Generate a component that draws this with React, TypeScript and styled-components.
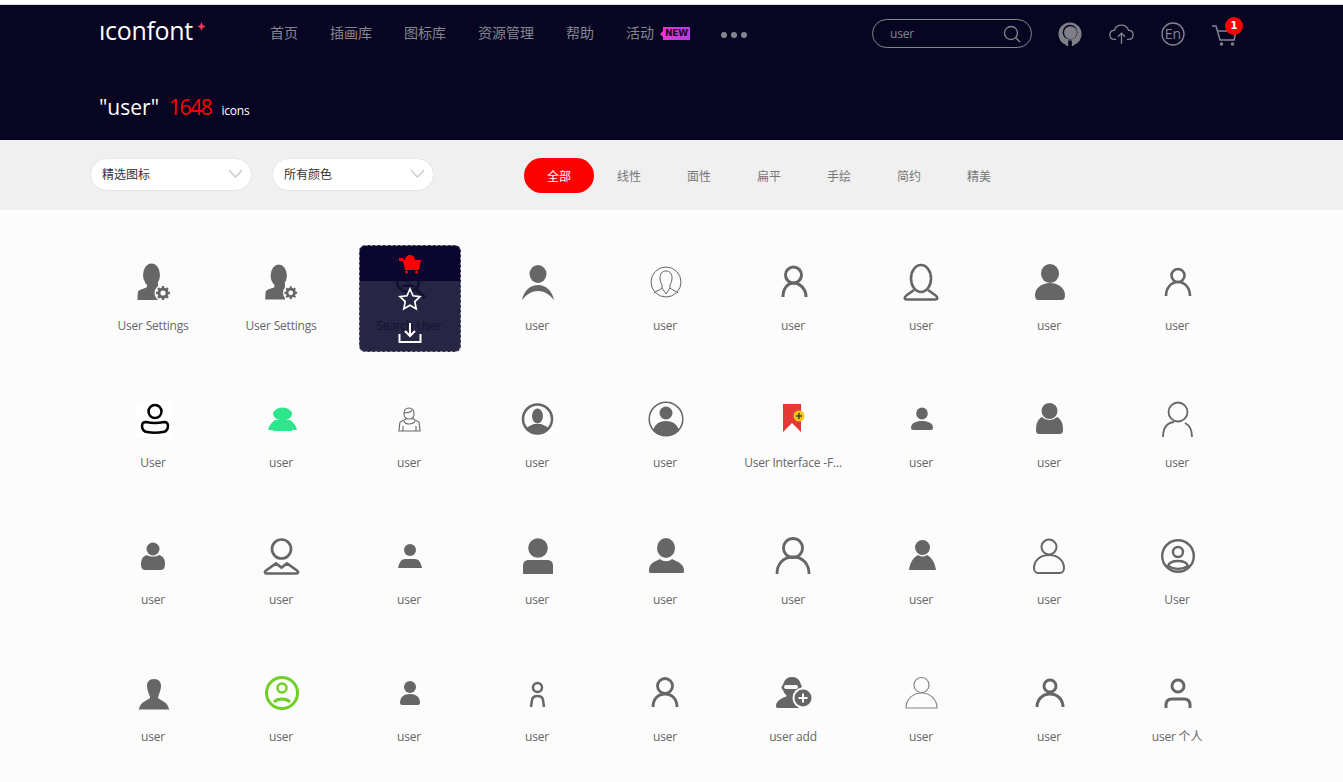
import styled, { createGlobalStyle } from 'styled-components';
import type { ReactNode } from 'react';

const GlobalStyle = createGlobalStyle`
  html, body {
    margin: 0;
    height: 100%;
    overflow: hidden;
    background: #fcfcfc;
    font-family: "Open Sans", "Noto Sans CJK SC", sans-serif;
  }
`;

const TopStrip = styled.div`
  height: 4px;
  background: #fff;
  border-bottom: 1px solid #ddd;
`;

const Header = styled.header`
  height: 135px;
  background: #070522;
  padding: 0 0 0 99px;
  box-sizing: border-box;
`;

const NavBar = styled.div`
  display: flex;
  align-items: center;
  height: 57px;
`;

const Logo = styled.div`
  display: flex;
  width: 171px;
  color: #fff;
  font: 500 25px/1 "Open Sans", sans-serif;
  letter-spacing: -0.3px;
  height: 30px;
  margin-bottom: 6px;
  align-items: center;
`;

const LogoStar = styled.svg`
  width: 9px;
  height: 9px;
  margin: -8px 0 0 4px;
`;

const NavList = styled.nav`
  display: flex;
  align-items: center;
  gap: 32px;
  width: 602px;
`;

const NavItem = styled.span`
  display: flex;
  align-items: center;
  color: #85858f;
  margin-bottom: 3px;
  font: 14px/20px "Noto Sans CJK SC", sans-serif;
`;

const NewBadge = styled.span`
  margin-left: 9px;
  width: 27px;
  height: 13px;
  position: relative;
  top: 1px;
  background: linear-gradient(90deg, #ec34cf, #b03fe0);
  color: #16082c;
  font: bold 9px/13px "DejaVu Sans", sans-serif;
  text-align: center;
  letter-spacing: -0.2px;
  &::before {
    content: '';
    position: absolute;
    left: -3px;
    top: 4px;
    border: 3px solid transparent;
    border-left: 0;
    border-right-color: #ec34cf;
  }
`;

const Dots = styled.span`
  display: flex;
  gap: 4px;
  margin: 2px 0 0 -1px;
  & i {
    width: 6px;
    height: 6px;
    border-radius: 50%;
    background: #85858f;
  }
`;

const SearchBox = styled.div`
  width: 160px;
  height: 29px;
  box-sizing: border-box;
  display: flex;
  align-items: center;
  justify-content: space-between;
  padding: 0 10px 0 17px;
  border: 1px solid #85858f;
  border-radius: 15px;
  color: #85858f;
  font-size: 12px;
  letter-spacing: -0.2px;
`;

const ToolIcons = styled.div`
  display: flex;
  align-items: center;
  margin-left: 26px;
  gap: 27px;
`;

const CartWrap = styled.div`
  position: relative;
  width: 26px;
  height: 30px;
`;

const CartIcon = styled.svg`
  display: block;
  margin-top: 6px;
`;

const CartBadge = styled.span`
  position: absolute;
  left: 13px;
  top: -2px;
  width: 18px;
  height: 18px;
  border-radius: 50%;
  background: #f00;
  color: #fff;
  font: bold 10px/18px "DejaVu Sans", sans-serif;
  text-align: center;
`;

const ResultTitle = styled.div`
  display: flex;
  align-items: baseline;
  margin-top: 31px;
  color: #fff;
  font-size: 21px;
  line-height: 28px;
`;

const ResultCount = styled.span`
  color: #f00;
  letter-spacing: -1.4px;
  margin: 0 10px 0 10px;
`;

const ResultUnit = styled.span`
  font-size: 12px;
  letter-spacing: -0.2px;
`;

const FilterBar = styled.div`
  display: flex;
  align-items: flex-start;
  height: 70px;
  box-sizing: border-box;
  padding: 18px 0 0 90px;
  background: #f0f0f0;
`;

const Select = styled.div`
  width: 162px;
  height: 33px;
  margin-right: 20px;
  box-sizing: border-box;
  display: flex;
  align-items: center;
  justify-content: space-between;
  padding: 0 8px 2px 11px;
  background: #fff;
  border: 1px solid #e6e6e6;
  border-radius: 17px;
  color: #333;
  font: 12px/1 "Noto Sans CJK SC", sans-serif;
`;

const Tabs = styled.div`
  display: flex;
  margin-left: 70px;
`;

const Tab = styled.div<{ $active?: boolean }>`
  width: 70px;
  height: 35px;
  border-radius: 18px;
  text-align: center;
  background: ${p => (p.$active ? '#f00' : 'transparent')};
  color: ${p => (p.$active ? '#fff' : '#777')};
  font: 12px/35px "Noto Sans CJK SC", sans-serif;
`;

const Grid = styled.main`
  display: grid;
  grid-template-columns: repeat(9, 128px);
  padding: 35px 0 0 89px;
`;

const Cell = styled.div`
  position: relative;
  height: 137px;
  display: flex;
  flex-direction: column;
  align-items: center;
`;

const IconSvg = styled.svg<{ $color?: string }>`
  display: block;
  width: 40px;
  height: 40px;
  margin-top: 17px;
  color: ${p => p.$color || '#666'};
  flex: none;
`;

const Label = styled.div`
  width: 102px;
  margin-top: 15px;
  color: #666;
  font: 12px/18px "Open Sans", "Noto Sans CJK SC", sans-serif;
  letter-spacing: -0.2px;
  text-align: center;
  white-space: nowrap;
  overflow: hidden;
`;

const HoverCard = styled.div`
  position: absolute;
  left: 14px;
  top: 0;
  width: 102px;
  height: 107px;
  box-sizing: border-box;
  border: 1px dashed #8d8d9b;
  border-radius: 6px;
  overflow: hidden;
  display: flex;
  flex-direction: column;
  align-items: center;
  background: rgba(7, 5, 40, 0.87);
`;

const CardTop = styled.div`
  width: 100%;
  height: 35px;
  flex: none;
  display: flex;
  align-items: flex-start;
  justify-content: center;
  padding: 6px 1px 0 0;
  box-sizing: border-box;
  background: #0a0630;
`;

const CardAction = styled.div`
  height: 35px;
  flex: none;
  display: flex;
  align-items: center;
  margin-right: 1px;
`;

const Gear = ({ x, y, r = 1 }: { x: number; y: number; r?: number }) => (
  <g transform={`translate(${x} ${y}) scale(${r})`}>
    <circle r="8.5" fill="#fcfcfc" />
    <circle r="4.2" fill="none" stroke="currentColor" strokeWidth="2.6" />
    {[0, 45, 90, 135].map(a => (
      <rect key={a} x="-1.2" y="-7" width="2.4" height="14" fill="currentColor" transform={`rotate(${a})`} />
    ))}
    <circle r="2.6" fill="#fcfcfc" />
  </g>
);

const Bust = (
  <>
    <ellipse cx="18.500" cy="13" rx="8.500" ry="11.500" fill="currentColor" />
    <path d="M14 21v4c-3 2-8 2-9 5-.5 2-.5 5-.5 8H25V21z" fill="currentColor" />
  </>
);

const thin = { fill: 'none', stroke: 'currentColor' } as const;

interface IconDef {
  label: string;
  color?: string;
  art: ReactNode;
  card?: boolean;
}

const ICONS: IconDef[] = [
  { label: 'User Settings', art: <>{Bust}<Gear x={30} y={31} /></> },
  { label: 'User Settings', art: <g transform="translate(0 1) scale(.96)">{Bust}<Gear x={31} y={31} r={.95} /></g> },
  {
    label: 'Search User',
    card: true,
    art: (
      <>
        <circle cx="19" cy="19" r="11" {...thin} strokeWidth="3" />
        <path d="M27 27l9 9" {...thin} strokeWidth="3.500" />
        <circle cx="19" cy="16" r="4" fill="currentColor" />
        <path d="M12 25c1-4 13-4 14 0z" fill="currentColor" />
      </>
    ),
  },
  {
    label: 'user',
    art: (
      <>
        <ellipse cx="21" cy="12" rx="8.500" ry="9" fill="currentColor" />
        <path d="M5 38c2-10 9-15 16-15s14 5 16 15c-5-6-10-9-16-9S10 32 5 38z" fill="currentColor" />
      </>
    ),
  },
  {
    label: 'user',
    art: (
      <g {...thin} strokeWidth="1">
        <circle cx="21" cy="20" r="15" />
        <path d="M21 9c-4 0-6 3-6 7 0 3 1 5 2 7v3c-2 2-6 3-8 5M21 9c4 0 6 3 6 7 0 3-1 5-2 7v3c2 2 6 3 8 5M17 26l4 6 4-6" />
      </g>
    ),
  },
  {
    label: 'user',
    art: (
      <g {...thin} strokeWidth="3">
        <ellipse cx="20.500" cy="13" rx="8" ry="8" />
        <path d="M10 35c0-9 5-14 10.500-14S33 26 33 35" />
      </g>
    ),
  },
  {
    label: 'user',
    art: (
      <g {...thin} strokeWidth="2.600">
        <ellipse cx="20" cy="16.500" rx="10" ry="13.500" />
        <path d="M13 28l-7 5c-3 2-3 4.500 0 4.500h28c3 0 3-2.500 0-4.500l-7-5" />
      </g>
    ),
  },
  {
    label: 'user',
    art: (
      <>
        <ellipse cx="21" cy="11.500" rx="9" ry="9.500" fill="currentColor" />
        <path d="M6 33c0-6 6-12 15-12s15 6 15 12c0 3-1 5-3 5H9c-2 0-3-2-3-5z" fill="currentColor" />
      </>
    ),
  },
  {
    label: 'user',
    art: (
      <g {...thin} strokeWidth="2.600">
        <circle cx="21" cy="13.500" r="6.500" />
        <path d="M9 34c0-8 5-14 12-14s12 6 12 14" />
      </g>
    ),
  },

  {
    label: 'User',
    art: (
      <>
        <rect x="3" y="3" width="36" height="35" fill="#fff" />
        <g fill="none" stroke="#000" strokeWidth="2.500">
          <circle cx="22" cy="12.500" r="6.500" />
          <path d="M13 23c5 1 13 1 18 0 3 0 4 2 4 4 0 3-2 6-5 6-5 1-11 1-16 0-3 0-5-3-5-6 0-2 1-4 4-4z" />
        </g>
      </>
    ),
  },
  {
    label: 'user',
    color: '#2ee68c',
    art: (
      <>
        <ellipse cx="21.500" cy="15" rx="9.500" ry="6.500" fill="currentColor" />
        <rect x="17" y="9" width="9" height="4" rx="2" fill="currentColor" />
        <path d="M7 31c1-5 4-8 7-10h15c3 2 6 5 7 10h-5v1H12v-1z" fill="currentColor" />
      </>
    ),
  },
  {
    label: 'user',
    art: (
      <g {...thin} strokeWidth="1.100">
        <path d="M15 15c0-4 2-6 5-6s5 2 5 6c0 3-2 5-5 5s-5-2-5-5zM15 14c3 0 7-1 8-3" />
        <path d="M17 19v1l-6 3-1 8v1h21v-1l-1-8-6-3v-1M15 22c1 4 9 4 11 0M14 27v5M27 27v5" />
      </g>
    ),
  },
  {
    label: 'user',
    art: (
      <>
        <circle cx="20.500" cy="20" r="14.500" {...thin} strokeWidth="2.500" />
        <ellipse cx="20.500" cy="17" rx="5.500" ry="7.500" fill="currentColor" />
        <path d="M9 30c2-3 6-4 8-5h7c2 1 6 2 8 5-3 3-7 4.500-11.500 4.500S12 33 9 30z" fill="currentColor" />
      </>
    ),
  },
  {
    label: 'user',
    art: (
      <>
        <circle cx="21" cy="20" r="16.800" {...thin} strokeWidth="1.500" />
        <circle cx="21" cy="14" r="6.500" fill="currentColor" />
        <path d="M8 32c1-6 6-10 13-10s12 4 13 10c-3 3-8 5-13 5s-10-2-13-5z" fill="currentColor" />
      </>
    ),
  },
  {
    label: 'User Interface -F...',
    art: (
      <>
        <path d="M10 5h18v28l-9-9-9 9z" fill="#e53935" />
        <circle cx="26" cy="17" r="5.500" fill="#f5c518" />
        <path d="M26 14v6M23 17h6" stroke="#444" strokeWidth="1.600" />
      </>
    ),
  },
  {
    label: 'user',
    art: (
      <>
        <ellipse cx="21" cy="14.500" rx="5.800" ry="6" fill="currentColor" />
        <path d="M10 29c0-5 5-7 11-7s11 2 11 7c0 1-1 2-2 2H12c-1 0-2-1-2-2z" fill="currentColor" />
      </>
    ),
  },
  {
    label: 'user',
    art: (
      <>
        <ellipse cx="20.500" cy="12" rx="8" ry="8" fill="currentColor" />
        <path d="M7 31c0-7 2-11 6-13 4 4 11 4 15 0 4 2 6 6 6 13 0 3-1 4-4 4H11c-3 0-4-1-4-4z" fill="currentColor" />
      </>
    ),
  },
  {
    label: 'user',
    art: (
      <g {...thin} strokeWidth="1.800">
        <circle cx="21" cy="13" r="9.500" />
        <path d="M6 38c0-8 3-14 11-15M28 24c4 2 7 7 7 14" />
      </g>
    ),
  },

  {
    label: 'user',
    art: (
      <>
        <ellipse cx="20" cy="13" rx="6.500" ry="6.500" fill="currentColor" />
        <path d="M8 28c0-5 2-8 6-9 3 2 9 2 12 0 4 1 6 4 6 9 0 3-1 6-4 6H12c-3 0-4-3-4-6z" fill="currentColor" />
      </>
    ),
  },
  {
    label: 'user',
    art: (
      <g {...thin} strokeWidth="2.700">
        <circle cx="20.500" cy="13" r="9.500" />
        <path d="M5.500 37.500h30c2 0 2-2 .5-3L26 27.500l-5.500 4-5.500-4-10 7c-1.500 1-1.500 3 .5 3z" />
      </g>
    ),
  },
  {
    label: 'user',
    art: (
      <>
        <circle cx="21" cy="14" r="6" fill="currentColor" />
        <path d="M9 32c1-5 3-9 7-9h10c4 0 6 4 7 9z" fill="currentColor" />
      </>
    ),
  },
  {
    label: 'user',
    art: (
      <>
        <circle cx="21" cy="12" r="9.800" fill="currentColor" />
        <path d="M6 38V30c0-4 2-6 6-6h18c4 0 6 2 6 6v8z" fill="currentColor" />
      </>
    ),
  },
  {
    label: 'user',
    art: (
      <>
        <ellipse cx="21" cy="12" rx="9" ry="10" fill="currentColor" />
        <path d="M4 35c0-5 2-8 7-10l4-2c3 3 9 3 12 0l4 2c5 2 8 5 8 10 0 2-1 2-2 2H6c-1 0-2 0-2-2z" fill="currentColor" />
      </>
    ),
  },
  {
    label: 'user',
    art: (
      <g {...thin} strokeWidth="2.800">
        <ellipse cx="20" cy="12" rx="9.500" ry="9.500" />
        <path d="M4 38c0-10 6-17 16-17s16 7 16 17" />
      </g>
    ),
  },
  {
    label: 'user',
    art: (
      <>
        <ellipse cx="21.500" cy="11.500" rx="7.500" ry="7.500" fill="currentColor" />
        <path d="M8 34c1-8 5-13 9-15 3 2 6 2 9 0 4 2 8 7 9 15z" fill="currentColor" />
      </>
    ),
  },
  {
    label: 'user',
    art: (
      <g {...thin} strokeWidth="2">
        <circle cx="20" cy="11" r="7.500" />
        <path d="M5 32c0-8 7-13 15-13s15 5 15 13c0 3-2 5-4 5H9c-2 0-4-2-4-5z" />
      </g>
    ),
  },
  {
    label: 'User',
    art: (
      <g {...thin} strokeWidth="2.400">
        <circle cx="21" cy="20" r="15.800" />
        <circle cx="21" cy="16" r="5" />
        <path d="M11 30c1-3 5-5 10-5s9 2 10 5c-3 2-7 3-10 3s-7-1-10-3z" />
      </g>
    ),
  },

  {
    label: 'user',
    art: (
      <path d="M21 6c-5 0-7 3-7 7 0 4 2 8 3 11v1c-3 3-9 3-11 11l-1 .5h32l-1-.5c-2-8-8-8-11-11v-1c1-3 3-7 3-11 0-4-2-7-7-7z" fill="currentColor" />
    ),
  },
  {
    label: 'user',
    color: '#6fcf25',
    art: (
      <g {...thin} strokeWidth="3">
        <circle cx="21" cy="20" r="15.500" />
        <circle cx="21" cy="15" r="4.500" strokeWidth="2.500" />
        <path d="M13 29c4-4 12-4 16 0" />
      </g>
    ),
  },
  {
    label: 'user',
    art: (
      <>
        <ellipse cx="21" cy="14" rx="6" ry="6" fill="currentColor" />
        <path d="M11 30c0-6 4-9 10-9s10 3 10 9c0 1-1 2-2 2H13c-1 0-2-1-2-2z" fill="currentColor" />
      </>
    ),
  },
  {
    label: 'user',
    art: (
      <g {...thin} strokeWidth="2.500">
        <circle cx="20.500" cy="14.500" r="4.500" />
        <path d="M14 34l1-7c.5-3 2-4 5.500-4s5 1 5.500 4l1 7" />
      </g>
    ),
  },
  {
    label: 'user',
    art: (
      <g {...thin} strokeWidth="2.800">
        <circle cx="20" cy="13" r="7.500" />
        <path d="M8 34c0-8 5-13 12-13s12 5 12 13" />
      </g>
    ),
  },
  {
    label: 'user add',
    art: (
      <>
        <path d="M19 4c-5 0-8 3-9 8-2 1-2 4 0 5 1 3 2 4 4 6-4 2-11 4-11 10 0 2 1 2 3 2h22v-20c1-1 1-3 0-3-1-5-4-8-9-8z" fill="currentColor" />
        <rect x="11" y="12" width="14" height="4" rx="2" fill="#fcfcfc" />
        <circle cx="30" cy="25" r="10.500" fill="#fcfcfc" />
        <circle cx="30" cy="25" r="8.500" fill="currentColor" />
        <path d="M30 20.500v9M25.500 25h9" stroke="#fff" strokeWidth="2" />
      </>
    ),
  },
  {
    label: 'user',
    color: '#888',
    art: (
      <g {...thin} strokeWidth="1.200">
        <circle cx="20.500" cy="12" r="7.500" />
        <path d="M5 35c0-9 7-15 15.500-15S36 26 36 35z" />
      </g>
    ),
  },
  {
    label: 'user',
    art: (
      <g {...thin} strokeWidth="3">
        <circle cx="21" cy="13" r="6" />
        <path d="M8 34c0-7 5-13 13-13s13 6 13 13" />
      </g>
    ),
  },
  {
    label: 'user 个人',
    art: (
      <g {...thin} strokeWidth="3">
        <circle cx="21" cy="13" r="6" />
        <path d="M9 35v-3c0-4 2-6 6-6h12c4 0 6 2 6 6v3" />
      </g>
    ),
  },
];

const App = () => {
  return (
    <>
      <GlobalStyle />
      <TopStrip />
      <Header>
        <NavBar>
          <Logo>
            ıconfont
            <LogoStar viewBox="0 0 10 10">
              <path d="M5 0l1.500 3.500L10 5 6.500 6.500 5 10 3.500 6.500 0 5l3.500-1.500z" fill="#f1365f" />
            </LogoStar>
          </Logo>
          <NavList>
            <NavItem>首页</NavItem>
            <NavItem>插画库</NavItem>
            <NavItem>图标库</NavItem>
            <NavItem>资源管理</NavItem>
            <NavItem>帮助</NavItem>
            <NavItem>活动<NewBadge>NEW</NewBadge></NavItem>
            <Dots><i /><i /><i /></Dots>
          </NavList>
          <SearchBox>
            user
            <svg width="18" height="18" viewBox="0 0 18 18" fill="none" stroke="#85858f" strokeWidth="1.300">
              <circle cx="8" cy="8" r="6.500" />
              <path d="M12.500 12.500l4.500 4.500" />
            </svg>
          </SearchBox>
          <ToolIcons>
            <svg width="24" height="24" viewBox="0 0 26 26">
              <circle cx="13" cy="13" r="12.500" fill="#7f7f88" />
              <circle cx="13" cy="11" r="8" fill="#070522" />
              <circle cx="13.500" cy="11.500" r="7" fill="#7f7f88" />
              <path d="M9 26v-6h8v6z" fill="#7f7f88" />
              <rect x="11" y="20" width="4" height="6" fill="#070522" />
            </svg>
            <svg width="25" height="22" viewBox="0 0 28 24" fill="none" stroke="#85858f" strokeWidth="1.500">
              <path d="M8 18H6c-3 0-5-2-5-5s2-5 5-5c1-4 4-6 8-6s7 3 8 6c3 0 5 2 5 5s-2 5-5 5h-2" />
              <path d="M14 23V11M10 15l4-4 4 4" />
            </svg>
            <svg width="24" height="24" viewBox="0 0 24 24">
              <circle cx="12" cy="12" r="11" fill="none" stroke="#85858f" strokeWidth="1.300" />
              <text x="12" y="16.500" textAnchor="middle" fill="#85858f" fontSize="14" fontFamily="Open Sans, sans-serif">En</text>
            </svg>
            <CartWrap>
              <CartIcon width="26" height="21" viewBox="0 2 26 21" fill="none" stroke="#85858f" strokeWidth="1.500">
                <path d="M0 3h4l4 14h14l2-9" />
                <path d="M6 8h18" />
                <circle cx="9.500" cy="21" r="1" />
                <circle cx="20.500" cy="21" r="1" />
              </CartIcon>
              <CartBadge>1</CartBadge>
            </CartWrap>
          </ToolIcons>
        </NavBar>
        <ResultTitle>
          "user"
          <ResultCount>1648</ResultCount>
          <ResultUnit>icons</ResultUnit>
        </ResultTitle>
      </Header>
      <FilterBar>
        <Select>
          精选图标
          <svg width="15" height="9" viewBox="0 0 17 10" fill="none" stroke="#c9c9d0" strokeWidth="1.500"><path d="M1 1l7.500 8L16 1" /></svg>
        </Select>
        <Select>
          所有颜色
          <svg width="15" height="9" viewBox="0 0 17 10" fill="none" stroke="#c9c9d0" strokeWidth="1.500"><path d="M1 1l7.500 8L16 1" /></svg>
        </Select>
        <Tabs>
          <Tab $active>全部</Tab>
          <Tab>线性</Tab>
          <Tab>面性</Tab>
          <Tab>扁平</Tab>
          <Tab>手绘</Tab>
          <Tab>简约</Tab>
          <Tab>精美</Tab>
        </Tabs>
      </FilterBar>
      <Grid>
        {ICONS.map((icon, i) => (
          <Cell key={i}>
            <IconSvg viewBox="0 0 40 40" $color={icon.color}>{icon.art}</IconSvg>
            <Label>{icon.label}</Label>
            {icon.card && (
              <HoverCard>
                <CardTop>
                  <svg width="24" height="22" viewBox="0 0 24 22" fill="#f00">
                    <path d="M7 8a5 5 0 0 1 10 0z" />
                    <path d="M1 6h4l1 2h17l-2 10H7L5 9H1z" />
                    <circle cx="8.500" cy="20" r="1.500" />
                    <circle cx="18.500" cy="20" r="1.500" />
                  </svg>
                </CardTop>
                <CardAction>
                  <svg width="24" height="24" viewBox="0 0 24 24" fill="none" stroke="#fff" strokeWidth="1.700">
                    <path d="M12 2l3 6.800 7 .8-5.200 5 1.400 7.200L12 18.300l-6.200 3.500 1.400-7.200-5.200-5 7-.8z" />
                  </svg>
                </CardAction>
                <CardAction>
                  <svg width="24" height="22" viewBox="0 0 24 22" fill="none" stroke="#fff" strokeWidth="2">
                    <path d="M12 0v13M7 8l5 5 5-5" />
                    <path d="M1.500 11v8h21v-8" />
                  </svg>
                </CardAction>
              </HoverCard>
            )}
          </Cell>
        ))}
      </Grid>
    </>
  );
};

export default App;
